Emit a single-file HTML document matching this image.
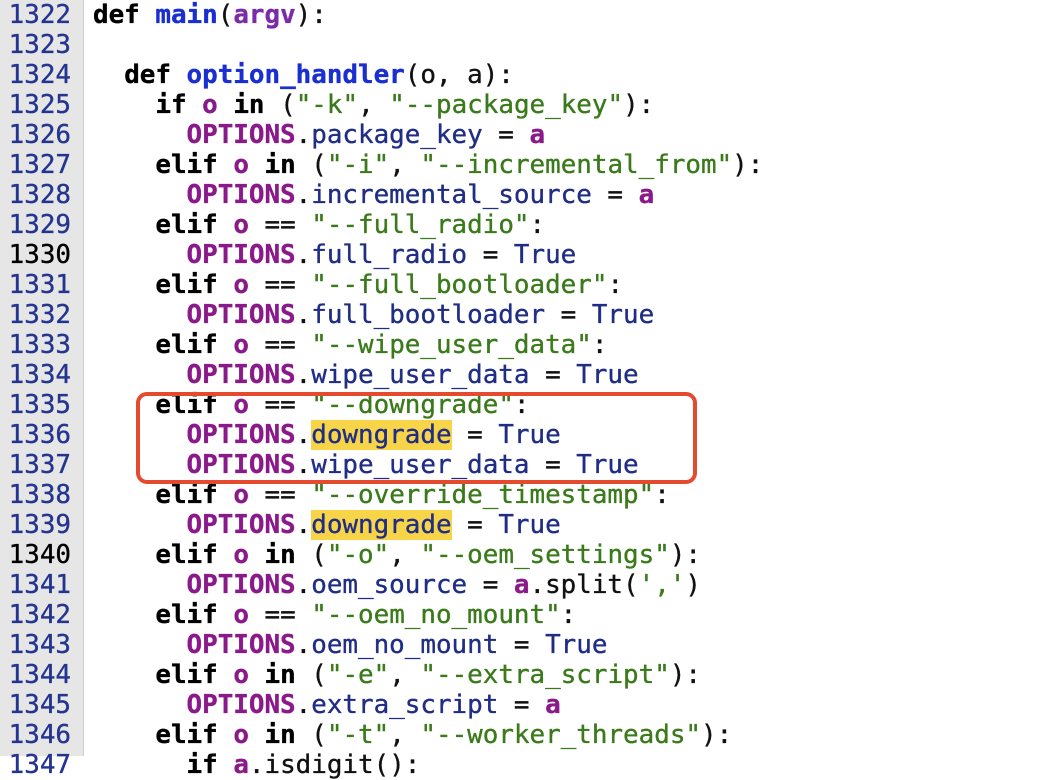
<!DOCTYPE html>
<html><head><meta charset="utf-8"><style>
body{margin:0;width:1038px;height:756px;overflow:hidden;background:#fff;position:relative;font-family:"DejaVu Sans Mono","Liberation Mono",monospace;font-size:25.9px}
#g{position:absolute;left:0;top:0;width:83px;height:756px;background:#e6e6e6;border-right:1px solid #d0d0d0}
.l{position:absolute;left:0;height:30px;line-height:30px;white-space:pre;-webkit-text-stroke:0.35px currentColor}
.n{width:71px;text-align:right;color:#24358f}
.c{left:93px;color:#111}
.k{color:#000;font-weight:bold}.f{color:#1a2fd0;font-weight:bold}.p{color:#7b2aa8;font-weight:bold}
.o{color:#8a1a8a;font-weight:bold}.a{color:#1f2d85}.s{color:#3a7a1a}.h{background:#f8d548}
#box{position:absolute;left:136px;top:392px;width:553px;height:84px;border:4px solid #e44a2e;border-radius:11px}
</style></head><body>
<div id="g"></div>
<div class="l n" style="top:0">1322</div><div class="l n" style="top:30px">1323</div><div class="l n" style="top:60px">1324</div><div class="l n" style="top:90px">1325</div><div class="l n" style="top:120px">1326</div><div class="l n" style="top:150px">1327</div><div class="l n" style="top:180px">1328</div><div class="l n" style="top:210px">1329</div><div class="l n" style="top:240px;color:#000">1330</div><div class="l n" style="top:270px">1331</div><div class="l n" style="top:300px">1332</div><div class="l n" style="top:330px">1333</div><div class="l n" style="top:360px">1334</div><div class="l n" style="top:390px">1335</div><div class="l n" style="top:420px">1336</div><div class="l n" style="top:450px">1337</div><div class="l n" style="top:480px">1338</div><div class="l n" style="top:510px">1339</div><div class="l n" style="top:540px;color:#000">1340</div><div class="l n" style="top:570px">1341</div><div class="l n" style="top:600px">1342</div><div class="l n" style="top:630px">1343</div><div class="l n" style="top:660px">1344</div><div class="l n" style="top:690px">1345</div><div class="l n" style="top:720px">1346</div><div class="l n" style="top:750px">1347</div>
<div class="l c" style="top:0"><span class="k">def</span> <span class="f">main</span>(<span class="p">argv</span>):</div>
<div class="l c" style="top:60px">  <span class="k">def</span> <span class="f">option_handler</span>(o, a):</div>
<div class="l c" style="top:90px">    <span class="k">if</span> <span class="o">o</span> <span class="k">in</span> (<span class="s">"-k"</span>, <span class="s">"--package_key"</span>):</div>
<div class="l c" style="top:120px">      <span class="o">OPTIONS</span>.<span class="a">package_key</span> = <span class="o">a</span></div>
<div class="l c" style="top:150px">    <span class="k">elif</span> <span class="o">o</span> <span class="k">in</span> (<span class="s">"-i"</span>, <span class="s">"--incremental_from"</span>):</div>
<div class="l c" style="top:180px">      <span class="o">OPTIONS</span>.<span class="a">incremental_source</span> = <span class="o">a</span></div>
<div class="l c" style="top:210px">    <span class="k">elif</span> <span class="o">o</span> == <span class="s">"--full_radio"</span>:</div>
<div class="l c" style="top:240px">      <span class="o">OPTIONS</span>.<span class="a">full_radio</span> = <span class="a">True</span></div>
<div class="l c" style="top:270px">    <span class="k">elif</span> <span class="o">o</span> == <span class="s">"--full_bootloader"</span>:</div>
<div class="l c" style="top:300px">      <span class="o">OPTIONS</span>.<span class="a">full_bootloader</span> = <span class="a">True</span></div>
<div class="l c" style="top:330px">    <span class="k">elif</span> <span class="o">o</span> == <span class="s">"--wipe_user_data"</span>:</div>
<div class="l c" style="top:360px">      <span class="o">OPTIONS</span>.<span class="a">wipe_user_data</span> = <span class="a">True</span></div>
<div class="l c" style="top:390px">    <span class="k">elif</span> <span class="o">o</span> == <span class="s">"--downgrade"</span>:</div>
<div class="l c" style="top:420px">      <span class="o">OPTIONS</span>.<span class="a h">downgrade</span> = <span class="a">True</span></div>
<div class="l c" style="top:450px">      <span class="o">OPTIONS</span>.<span class="a">wipe_user_data</span> = <span class="a">True</span></div>
<div class="l c" style="top:480px">    <span class="k">elif</span> <span class="o">o</span> == <span class="s">"--override_timestamp"</span>:</div>
<div class="l c" style="top:510px">      <span class="o">OPTIONS</span>.<span class="a h">downgrade</span> = <span class="a">True</span></div>
<div class="l c" style="top:540px">    <span class="k">elif</span> <span class="o">o</span> <span class="k">in</span> (<span class="s">"-o"</span>, <span class="s">"--oem_settings"</span>):</div>
<div class="l c" style="top:570px">      <span class="o">OPTIONS</span>.<span class="a">oem_source</span> = <span class="o">a</span>.split(<span class="s">','</span>)</div>
<div class="l c" style="top:600px">    <span class="k">elif</span> <span class="o">o</span> == <span class="s">"--oem_no_mount"</span>:</div>
<div class="l c" style="top:630px">      <span class="o">OPTIONS</span>.<span class="a">oem_no_mount</span> = <span class="a">True</span></div>
<div class="l c" style="top:660px">    <span class="k">elif</span> <span class="o">o</span> <span class="k">in</span> (<span class="s">"-e"</span>, <span class="s">"--extra_script"</span>):</div>
<div class="l c" style="top:690px">      <span class="o">OPTIONS</span>.<span class="a">extra_script</span> = <span class="o">a</span></div>
<div class="l c" style="top:720px">    <span class="k">elif</span> <span class="o">o</span> <span class="k">in</span> (<span class="s">"-t"</span>, <span class="s">"--worker_threads"</span>):</div>
<div class="l c" style="top:750px">      <span class="k">if</span> <span class="o">a</span>.isdigit():</div>
<div id="box"></div>
</body></html>
